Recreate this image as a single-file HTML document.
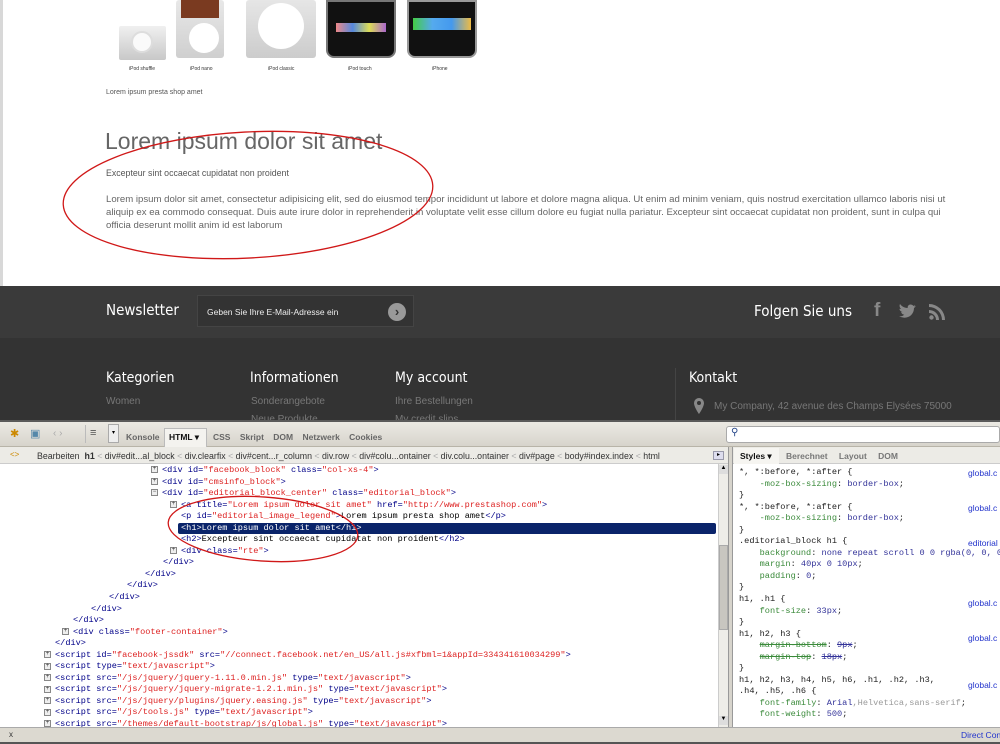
<!DOCTYPE html>
<html><head><meta charset="utf-8"><style>
*{box-sizing:border-box;margin:0;padding:0}
body{width:1000px;height:744px;overflow:hidden;background:#fff;font-family:"Liberation Sans",sans-serif;position:relative}
.a{position:absolute}
.mono{font-family:"Liberation Mono",monospace;font-size:8.6px;white-space:pre;line-height:11.55px}
.code{white-space:normal}
.code div{height:11.55px;white-space:pre}
.t{color:#000088}.at{color:#000088}.v{color:#dd2222}
.pl{display:inline-block;width:7px;height:7px;border:1px solid #888;font-size:6px;line-height:5px;text-align:center;color:#333;background:#eee;vertical-align:middle;margin-right:4px;font-family:"Liberation Sans"}
.ft{color:#fff;font-family:"DejaVu Sans Condensed","Liberation Sans Narrow","Liberation Sans",sans-serif;font-size:14px}
.fl{color:#777;font-size:10px;font-family:"Liberation Sans Narrow","Liberation Sans",sans-serif}
.g{color:#3a8a3a}.p{color:#333399}.lnk{color:#2233cc;font-family:"Liberation Sans",sans-serif;font-size:8.5px;white-space:nowrap}
</style></head><body>
<div class="a" style="left:0;top:0;width:3px;height:420px;background:#d8d8d8"></div>

<div class="a" style="top:26px;left:119px;width:47px;height:34px;background:linear-gradient(#f0f0f0,#c8c8c8);border-radius:2px"></div>
<div class="a" style="left:131px;top:31px;width:22px;height:22px;border-radius:50%;background:#fafafa;border:2px solid #ddd"></div>
<div class="a" style="left:176px;top:0;width:48px;height:58px;background:linear-gradient(#e8e8e8,#cfcfcf);border-radius:3px"></div>
<div class="a" style="left:181px;top:0;width:38px;height:18px;background:#7a3a20"></div>
<div class="a" style="left:189px;top:23px;width:30px;height:30px;border-radius:50%;background:#fff"></div>
<div class="a" style="left:246px;top:0;width:70px;height:58px;background:linear-gradient(#e6e6e6,#cccccc);border-radius:3px"></div>
<div class="a" style="left:258px;top:3px;width:46px;height:46px;border-radius:50%;background:#fff"></div>
<div class="a" style="left:326px;top:0;width:70px;height:58px;background:#111;border-radius:0 0 8px 8px;border:2px solid #777"></div>
<div class="a" style="left:336px;top:23px;width:50px;height:9px;background:linear-gradient(90deg,#e88,#58d,#dd5,#a6c)"></div>
<div class="a" style="left:407px;top:0;width:70px;height:58px;background:#111;border-radius:0 0 8px 8px;border:2px solid #999"></div>
<div class="a" style="left:413px;top:18px;width:58px;height:12px;background:linear-gradient(90deg,#4c4,#5ae,#49e,#eb4)"></div>
<div class="a" style="font-size:5px;color:#333;top:66px;left:129px">iPod shuffle</div>
<div class="a" style="font-size:5px;color:#333;top:66px;left:190px">iPod nano</div>
<div class="a" style="font-size:5px;color:#333;top:66px;left:268px">iPod classic</div>
<div class="a" style="font-size:5px;color:#333;top:66px;left:348px">iPod touch</div>
<div class="a" style="font-size:5px;color:#333;top:66px;left:432px">iPhone</div>
<div class="a" style="font-size:7px;color:#555;top:89px;left:106px">Lorem ipsum presta shop amet</div>

<div class="a" style="top:128px;left:105px;font-size:23px;color:#666">Lorem ipsum dolor sit amet</div>
<div class="a" style="top:168px;left:106px;font-size:8.8px;color:#555">Excepteur sint occaecat cupidatat non proident</div>
<div class="a" style="top:193px;left:106px;width:862px;font-size:9.6px;line-height:13px;color:#666">Lorem ipsum dolor sit amet, consectetur adipisicing elit, sed do eiusmod tempor incididunt ut labore et dolore magna aliqua. Ut enim ad minim veniam, quis nostrud exercitation ullamco laboris nisi ut aliquip ex ea commodo consequat. Duis aute irure dolor in reprehenderit in voluptate velit esse cillum dolore eu fugiat nulla pariatur. Excepteur sint occaecat cupidatat non proident, sunt in culpa qui officia deserunt mollit anim id est laborum</div>
<svg class="a" style="left:60px;top:125px" width="380" height="140"><ellipse cx="188" cy="70" rx="185" ry="63" fill="none" stroke="#d01818" stroke-width="1.3" transform="rotate(-3 188 70)"/></svg>

<div class="a" style="top:286px;left:0;width:1000px;height:52px;background:#3a3a3a"></div>
<div class="a" style="top:338px;left:0;width:1000px;height:82px;background:#333"></div>
<div class="a ft" style="top:301px;left:106px;font-size:15px">Newsletter</div>
<div class="a" style="top:295px;left:197px;width:217px;height:32px;background:#333;border:1px solid #444"></div>
<div class="a" style="top:307px;left:207px;font-size:8.5px;color:#eee">Geben Sie Ihre E-Mail-Adresse ein</div>
<div class="a" style="top:303px;left:388px;width:18px;height:18px;border-radius:50%;background:#999;color:#333;font-size:13px;line-height:17px;text-align:center;font-weight:bold">›</div>
<div class="a ft" style="top:302px;left:754px;font-size:15px">Folgen Sie uns</div>
<div class="a" style="top:300px;left:874px;color:#888;font-size:19px;font-weight:bold">f</div>
<svg class="a" style="left:899px;top:304px" width="18" height="15"><path d="M17 2c-1 .5-2 .7-2 .7 1-.6 1.3-1.6 1.3-1.6-1 .6-2 .8-2 .8C13 0 10 0 9 2c-.5 1-.3 2-.3 2C5 4 2.5 2 1 0 0 2 1 4 2 5c-1 0-1.5-.4-1.5-.4 0 2 1.5 3 3 3.4-.7.3-1.5.1-1.5.1.5 1.5 2 2.5 3.300 2.5C4 12 2 12.5 0 12.3 7 16 15 12 15 4c1-.6 2-2 2-2z" fill="#888"/></svg>
<svg class="a" style="left:929px;top:304px" width="16" height="16"><circle cx="2.5" cy="13.5" r="2.2" fill="#888"/><path d="M0 6a10 10 0 0 1 10 10h-3a7 7 0 0 0-7-7zM0 0a16 16 0 0 1 16 16h-3A13 13 0 0 0 0 3z" fill="#888"/></svg>

<div class="a ft" style="top:370px;left:106px">Kategorien</div>
<div class="a ft" style="top:370px;left:250px">Informationen</div>
<div class="a ft" style="top:370px;left:395px">My account</div>
<div class="a ft" style="top:370px;left:689px">Kontakt</div>
<div class="a" style="top:368px;left:675px;width:1px;height:52px;background:#444"></div>
<div class="a fl" style="top:396px;left:106px">Women</div>
<div class="a fl" style="top:396px;left:251px">Sonderangebote</div>
<div class="a fl" style="top:414px;left:251px">Neue Produkte</div>
<div class="a fl" style="top:396px;left:395px">Ihre Bestellungen</div>
<div class="a fl" style="top:414px;left:395px">My credit slips</div>
<svg class="a" style="left:693px;top:398px" width="12" height="16"><path d="M6 0a5 5 0 0 0-5 5c0 4 5 11 5 11s5-7 5-11a5 5 0 0 0-5-5zm0 3a2 2 0 1 1 0 4 2 2 0 0 1 0-4z" fill="#888"/></svg>
<div class="a fl" style="top:401px;left:714px">My Company, 42 avenue des Champs Elysées 75000</div>

<div class="a" style="top:420px;left:0;width:1000px;height:324px;background:#fff"></div>
<div class="a" style="top:420px;left:0;width:1000px;height:27px;background:linear-gradient(#ebe9e3,#d7d4cc);border-top:2px solid #5a5a5a;border-bottom:1px solid #b8b4a8"></div>
<div class="a" style="top:427px;left:10px;color:#c80;font-size:11px">✱</div>
<div class="a" style="top:427px;left:30px;color:#58a;font-size:11px">▣</div>
<div class="a" style="top:428px;left:53px;color:#aaa;font-size:10px">‹ ›</div>
<div class="a" style="top:425px;left:85px;width:1px;height:18px;background:#bbb"></div>
<div class="a" style="top:427px;left:90px;color:#555;font-size:11px">≡</div>
<div class="a" style="top:424px;left:108px;width:11px;height:19px;border:1px solid #aaa;background:#eee;font-size:6px;text-align:center;line-height:17px">▾</div>
<div class="a" style="top:432px;left:126px;font-size:8.5px;font-weight:bold;color:#666">Konsole</div>
<div class="a" style="top:428px;left:164px;width:43px;height:19px;background:#f4f3ef;border:1px solid #bbb;border-bottom:none"></div>
<div class="a" style="top:432px;left:169px;font-size:8.5px;font-weight:bold;color:#111">HTML ▾</div>
<div class="a" style="top:432px;left:213px;font-size:8.5px;font-weight:bold;color:#666;word-spacing:7px">CSS Skript DOM Netzwerk Cookies</div>
<div class="a" style="top:426px;left:726px;width:274px;height:17px;background:#fff;border:1px solid #aaa;border-radius:3px"></div>
<div class="a" style="top:427px;left:731px;font-size:10px;color:#248">⚲</div>

<div class="a" style="top:447px;left:0;width:728px;height:17px;background:#ecebe6;border-bottom:1px solid #ccc"></div>
<div class="a" style="top:450px;left:10px;font-size:8px;color:#c80">&lt;&gt;</div>
<div class="a" style="top:451px;left:37px;font-size:8.8px;color:#333;white-space:pre">Bearbeiten  <b>h1</b> <span style="color:#aaa">&lt;</span> div#edit...al_block <span style="color:#aaa">&lt;</span> div.clearfix <span style="color:#aaa">&lt;</span> div#cent...r_column <span style="color:#aaa">&lt;</span> div.row <span style="color:#aaa">&lt;</span> div#colu...ontainer <span style="color:#aaa">&lt;</span> div.colu...ontainer <span style="color:#aaa">&lt;</span> div#page <span style="color:#aaa">&lt;</span> body#index.index <span style="color:#aaa">&lt;</span> html</div>
<div class="a" style="top:451px;left:713px;width:11px;height:9px;border:1px solid #99a;background:#dde;font-size:6px;text-align:center;line-height:7px">▸</div>

<div class="a" style="top:523px;left:178px;width:538px;height:11px;background:#0a246a;border-radius:2px"></div>
<div class="a mono code" style="top:465px;left:0;width:716px"><div style="margin-left:151px"><span class="pl">+</span><span class="t">&lt;div </span><span class="at">id=</span><span class="v">"facebook_block"</span><span class="at"> class=</span><span class="v">"col-xs-4"</span><span class="t">&gt;</span></div><div style="margin-left:151px"><span class="pl">+</span><span class="t">&lt;div </span><span class="at">id=</span><span class="v">"cmsinfo_block"</span><span class="t">&gt;</span></div><div style="margin-left:151px"><span class="pl">−</span><span class="t">&lt;div </span><span class="at">id=</span><span class="v">"editorial_block_center"</span><span class="at"> class=</span><span class="v">"editorial_block"</span><span class="t">&gt;</span></div><div style="margin-left:170px"><span class="pl">+</span><span class="t">&lt;a </span><span class="at">title=</span><span class="v">"Lorem ipsum dolor sit amet"</span><span class="at"> href=</span><span class="v">"http://www.prestashop.com"</span><span class="t">&gt;</span></div><div style="margin-left:181px"><span class="t">&lt;p </span><span class="at">id=</span><span class="v">"editorial_image_legend"</span><span class="t">&gt;</span>Lorem ipsum presta shop amet<span class="t">&lt;/p&gt;</span></div><div style="margin-left:181px;color:#fff">&lt;h1&gt;Lorem ipsum dolor sit amet&lt;/h1&gt;</div><div style="margin-left:181px"><span class="t">&lt;h2&gt;</span>Excepteur sint occaecat cupidatat non proident<span class="t">&lt;/h2&gt;</span></div><div style="margin-left:170px"><span class="pl">+</span><span class="t">&lt;div </span><span class="at">class=</span><span class="v">"rte"</span><span class="t">&gt;</span></div><div class="t" style="margin-left:163px">&lt;/div&gt;</div><div class="t" style="margin-left:145px">&lt;/div&gt;</div><div class="t" style="margin-left:127px">&lt;/div&gt;</div><div class="t" style="margin-left:109px">&lt;/div&gt;</div><div class="t" style="margin-left:91px">&lt;/div&gt;</div><div class="t" style="margin-left:73px">&lt;/div&gt;</div><div style="margin-left:62px"><span class="pl">+</span><span class="t">&lt;div </span><span class="at">class=</span><span class="v">"footer-container"</span><span class="t">&gt;</span></div><div class="t" style="margin-left:55px">&lt;/div&gt;</div><div style="margin-left:44px"><span class="pl">+</span><span class="t">&lt;script </span><span class="at">id=</span><span class="v">"facebook-jssdk"</span><span class="at"> src=</span><span class="v">"//connect.facebook.net/en_US/all.js#xfbml=1&amp;appId=334341610034299"</span><span class="t">&gt;</span></div><div style="margin-left:44px"><span class="pl">+</span><span class="t">&lt;script </span><span class="at">type=</span><span class="v">"text/javascript"</span><span class="t">&gt;</span></div><div style="margin-left:44px"><span class="pl">+</span><span class="t">&lt;script </span><span class="at">src=</span><span class="v">"/js/jquery/jquery-1.11.0.min.js"</span><span class="at"> type=</span><span class="v">"text/javascript"</span><span class="t">&gt;</span></div><div style="margin-left:44px"><span class="pl">+</span><span class="t">&lt;script </span><span class="at">src=</span><span class="v">"/js/jquery/jquery-migrate-1.2.1.min.js"</span><span class="at"> type=</span><span class="v">"text/javascript"</span><span class="t">&gt;</span></div><div style="margin-left:44px"><span class="pl">+</span><span class="t">&lt;script </span><span class="at">src=</span><span class="v">"/js/jquery/plugins/jquery.easing.js"</span><span class="at"> type=</span><span class="v">"text/javascript"</span><span class="t">&gt;</span></div><div style="margin-left:44px"><span class="pl">+</span><span class="t">&lt;script </span><span class="at">src=</span><span class="v">"/js/tools.js"</span><span class="at"> type=</span><span class="v">"text/javascript"</span><span class="t">&gt;</span></div><div style="margin-left:44px"><span class="pl">+</span><span class="t">&lt;script </span><span class="at">src=</span><span class="v">"/themes/default-bootstrap/js/global.js"</span><span class="at"> type=</span><span class="v">"text/javascript"</span><span class="t">&gt;</span></div></div>
<svg class="a" style="left:165px;top:492px" width="200" height="80"><ellipse cx="98" cy="37" rx="95" ry="32" fill="none" stroke="#d01818" stroke-width="1.3" transform="rotate(4 98 37)"/></svg>

<div class="a" style="top:464px;left:718px;width:10px;height:263px;background:#eeede8;border-left:1px solid #ccc"></div>
<div class="a" style="top:465px;left:719px;width:9px;height:9px;background:#ddd;font-size:6px;text-align:center">▲</div>
<div class="a" style="top:545px;left:719px;width:9px;height:85px;background:#c8c6c0;border:1px solid #aaa"></div>
<div class="a" style="top:716px;left:719px;width:9px;height:9px;background:#ddd;font-size:6px;text-align:center">▼</div>
<div class="a" style="top:447px;left:728px;width:5px;height:280px;background:#d7d4cc;border-left:1px solid #999;border-right:1px solid #999"></div>

<div class="a" style="top:447px;left:733px;width:267px;height:17px;background:#ecebe6;border-bottom:1px solid #ccc"></div>
<div class="a" style="top:448px;left:734px;width:45px;height:16px;background:#f6f5f1"></div>
<div class="a" style="top:451px;left:740px;font-size:8.5px;font-weight:bold;color:#111">Styles ▾</div>
<div class="a" style="top:451px;left:786px;font-size:8.5px;font-weight:bold;color:#777;word-spacing:9px">Berechnet Layout DOM</div>
<div class="a mono" style="top:467px;left:739px;color:#222">*, *:before, *:after {
    <span class="g">-moz-box-sizing</span>: <span class="p">border-box</span>;
}
*, *:before, *:after {
    <span class="g">-moz-box-sizing</span>: <span class="p">border-box</span>;
}
.editorial_block h1 {
    <span class="g">background</span>: <span class="p">none repeat scroll 0 0 rgba(0, 0, 0,</span>
    <span class="g">margin</span>: <span class="p">40px 0 10px</span>;
    <span class="g">padding</span>: <span class="p">0</span>;
}
h1, .h1 {
    <span class="g">font-size</span>: <span class="p">33px</span>;
}
h1, h2, h3 {
    <span class="g"><s>margin-bottom</s></span>: <span class="p"><s>9px</s></span>;
    <span class="g"><s>margin-top</s></span>: <span class="p"><s>18px</s></span>;
}
h1, h2, h3, h4, h5, h6, .h1, .h2, .h3,
.h4, .h5, .h6 {
    <span class="g">font-family</span>: <span class="p">Arial</span><span style="color:#999">,Helvetica,sans-serif</span>;
    <span class="g">font-weight</span>: <span class="p">500</span>;</div>
<div class="a lnk" style="top:468px;left:968px">global.c</div>
<div class="a lnk" style="top:503px;left:968px">global.c</div>
<div class="a lnk" style="top:538px;left:968px">editorial</div>
<div class="a lnk" style="top:598px;left:968px">global.c</div>
<div class="a lnk" style="top:633px;left:968px">global.c</div>
<div class="a lnk" style="top:680px;left:968px">global.c</div>

<div class="a" style="top:727px;left:0;width:1000px;height:17px;background:#dcd9d0;border-top:1px solid #aaa;border-bottom:2px solid #555"></div>
<div class="a" style="top:730px;left:9px;font-size:8px;color:#333">x</div>
<div class="a lnk" style="top:730px;left:961px">Direct Conn</div>
</body></html>
